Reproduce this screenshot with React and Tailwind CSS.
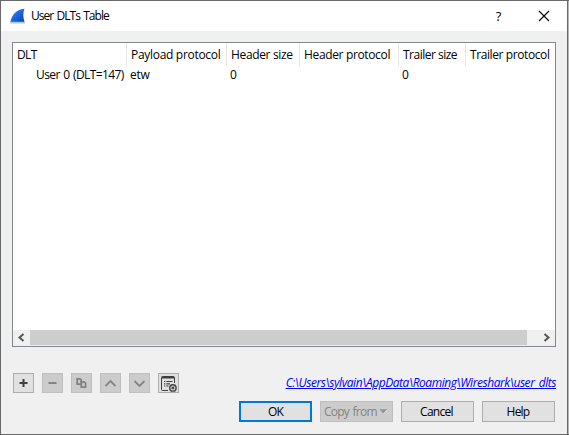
const columns = [
  { label: "DLT", value: "User 0 (DLT=147)", width: "w-[114px]", cell: "pl-[23px]", track: "tracking-[-0.6px]", cellTrack: "tracking-[-0.6px] [word-spacing:1px]" },
  { label: "Payload protocol", value: "etw", width: "w-[100px]", cell: "pl-[3px]", track: "tracking-[-0.3px]", cellTrack: "tracking-[-0.3px]" },
  { label: "Header size", value: "0", width: "w-[73px]", cell: "pl-[3px]", track: "tracking-[-0.35px]", cellTrack: "" },
  { label: "Header protocol", value: "", width: "w-[99px]", cell: "pl-[3px]", track: "tracking-[-0.35px]", cellTrack: "" },
  { label: "Trailer size", value: "0", width: "w-[67px]", cell: "pl-[3px]", track: "tracking-[-0.5px]", cellTrack: "" },
  { label: "Trailer protocol", value: "", width: "w-[89px]", cell: "pl-[3px]", track: "tracking-[-0.4px]", cellTrack: "" },
];

function Fin() {
  return (
    <svg width="17" height="17" viewBox="0 0 17 17" className="shrink-0">
      <defs>
        <linearGradient id="fin" x1="0" y1="0" x2="1" y2="1">
          <stop offset="0" stopColor="#3f8cf0" />
          <stop offset="0.5" stopColor="#1a66dc" />
          <stop offset="1" stopColor="#0b3fb4" />
        </linearGradient>
      </defs>
      <path d="M1.4 14C3.2 6 7.5 1.6 15.4 0.8C13.9 4.8 14 9.5 15.5 14Z" fill="url(#fin)" />
      <path d="M0.6 15.6L1.5 13.8H15.4L16.2 15.6Z" fill="#a9c5ee" />
    </svg>
  );
}

function ToolButton({ label, disabled, children }) {
  return (
    <button
      aria-label={label}
      className={
        "flex h-5 w-[21px] items-center justify-center border " +
        (disabled ? "border-[#bfbfbf] bg-[#cccccc]" : "border-[#adadad] bg-[#e1e1e1]")
      }
    >
      {children}
    </button>
  );
}

export default function App() {
  return (
    <div className="flex h-[435px] w-[569px] flex-col overflow-hidden border-y border-l border-[#696969] bg-[#f0f0f0] font-['Open_Sans','Noto_Sans',sans-serif] text-[12px] leading-4 text-black">
      <div className="flex min-h-0 flex-1 border-r border-[#b4b4b4]">
        <div className="flex min-w-0 flex-1 flex-col border-r border-[#696969]">
          <header className="flex h-[30px] shrink-0 items-center bg-white pl-2">
            <Fin />
            <span className="ml-[5px] whitespace-nowrap tracking-[-0.95px] [word-spacing:1px]">User DLTs Table</span>
            <span className="ml-auto w-[11px] text-center text-[13px] font-medium">?</span>
            <svg width="12" height="12" viewBox="0 0 12 12" className="mr-[17px] ml-[34px]">
              <path d="M1 1L11 11M11 1L1 11" stroke="#000" strokeWidth="1.1" />
            </svg>
          </header>
          <main className="flex flex-col px-[11px] pt-[11px]">
            <section className="flex h-[305px] w-[544px] flex-col border border-[#828790] bg-white">
              <div className="flex h-[23px]">
                {columns.map((c, i) => (
                  <div
                    key={c.label}
                    className={`flex shrink-0 items-center pl-1 whitespace-nowrap ${c.width} ${c.track} ${i < 5 ? "border-r border-[#e5e5e5]" : ""}`}
                  >
                    {c.label}
                  </div>
                ))}
              </div>
              <div className="flex h-[17px] pt-px">
                {columns.map((c) => (
                  <div key={c.label} className={`shrink-0 whitespace-nowrap ${c.width} ${c.cell} ${c.cellTrack}`}>
                    {c.value}
                  </div>
                ))}
              </div>
              <div className="mt-auto flex h-4 items-center bg-[#f0f0f0] pb-px">
                <svg width="17" height="15" viewBox="0 0 17 15">
                  <path d="M10.5 4L6.5 7.5L10.5 11" fill="none" stroke="#555" strokeWidth="2" />
                </svg>
                <div className="h-[15px] w-[497px] bg-[#cdcdcd]" />
                <svg width="17" height="15" viewBox="0 0 17 15" className="ml-auto">
                  <path d="M6.5 4L10.5 7.5L6.5 11" fill="none" stroke="#555" strokeWidth="2" />
                </svg>
              </div>
            </section>
            <div className="mt-[26px] flex h-5 items-center gap-2 pl-px">
              <ToolButton label="Add">
                <svg width="9" height="8" viewBox="0 0 9 8"><path d="M4.5 0V8M.5 4H8.5" stroke="#404040" strokeWidth="2" /></svg>
              </ToolButton>
              <ToolButton label="Remove" disabled>
                <svg width="9" height="8" viewBox="0 0 9 8"><path d="M.5 4H8.5" stroke="#858585" strokeWidth="2" /></svg>
              </ToolButton>
              <ToolButton label="Copy" disabled>
                <svg width="11" height="10" viewBox="0 0 11 10" fill="none" stroke="#808080" strokeWidth="1.7">
                  <path d="M5 6.2H1.2V.9H4L5.3 2.2V6.2" />
                  <path d="M5.3 3.9H8.2L9.6 5.2V9.1H5.3Z" />
                </svg>
              </ToolButton>
              <ToolButton label="Move up" disabled>
                <svg width="13" height="9" viewBox="0 0 13 9"><path d="M1.5 7L6.5 2L11.5 7" fill="none" stroke="#858585" strokeWidth="1.8" /></svg>
              </ToolButton>
              <ToolButton label="Move down" disabled>
                <svg width="13" height="9" viewBox="0 0 13 9"><path d="M1.5 2L6.5 7L11.5 2" fill="none" stroke="#858585" strokeWidth="1.8" /></svg>
              </ToolButton>
              <ToolButton label="Clear">
                <svg width="17" height="17" viewBox="0 0 17 17" className="shrink-0" fill="none" stroke="#404040">
                  <path d="M8 15.5H2.5Q1.5 15.5 1.5 14.5V2.5Q1.5 1.5 2.5 1.5H13.5Q14.5 1.5 14.5 2.5V8" />
                  <path d="M2 2.5H14" strokeWidth="2" />
                  <path d="M4 6.5H5.3M6.3 6.5H12.5M4 8.8H5.3M6.3 8.8H10M4 11H5.3M6.3 11H8.5" strokeWidth="1.2" />
                  <circle cx="12.9" cy="12.9" r="3.2" strokeWidth="1.4" />
                  <path d="M11.6 11.6L14.2 14.2M14.2 11.6L11.6 14.2" strokeWidth="1.2" />
                </svg>
              </ToolButton>
              <a className="ml-auto whitespace-nowrap italic tracking-[-0.45px] text-[#0000ff] underline">C:\Users\sylvain\AppData\Roaming\Wireshark\user_dlts</a>
            </div>
            <div className="mt-2 flex justify-end gap-2 pr-px">
              <button className="h-[21px] w-[73px] border-2 border-[#0078d7] bg-[#e1e1e1] leading-[17px] tracking-[-0.9px]">OK</button>
              <button className="flex h-[21px] w-[73px] items-center border border-[#bfbfbf] bg-[#cccccc] pl-[3px] tracking-[-0.75px] [word-spacing:1px] whitespace-nowrap text-[#838383]">
                Copy from
                <svg width="9" height="5" viewBox="0 0 9 5" className="ml-auto mr-1"><path d="M.3 .3H8.7L4.5 4.7Z" fill="#939393" /><path d="M8.7 .5L4.5 4.8" stroke="#fff" strokeWidth=".7" /></svg>
              </button>
              <button className="h-[21px] w-[73px] border border-[#adadad] bg-[#e1e1e1] pr-[2px] tracking-[-0.7px]">Cancel</button>
              <button className="h-[21px] w-[73px] border border-[#adadad] bg-[#e1e1e1] pr-px tracking-[-0.8px]">Help</button>
            </div>
          </main>
        </div>
      </div>
    </div>
  );
}
